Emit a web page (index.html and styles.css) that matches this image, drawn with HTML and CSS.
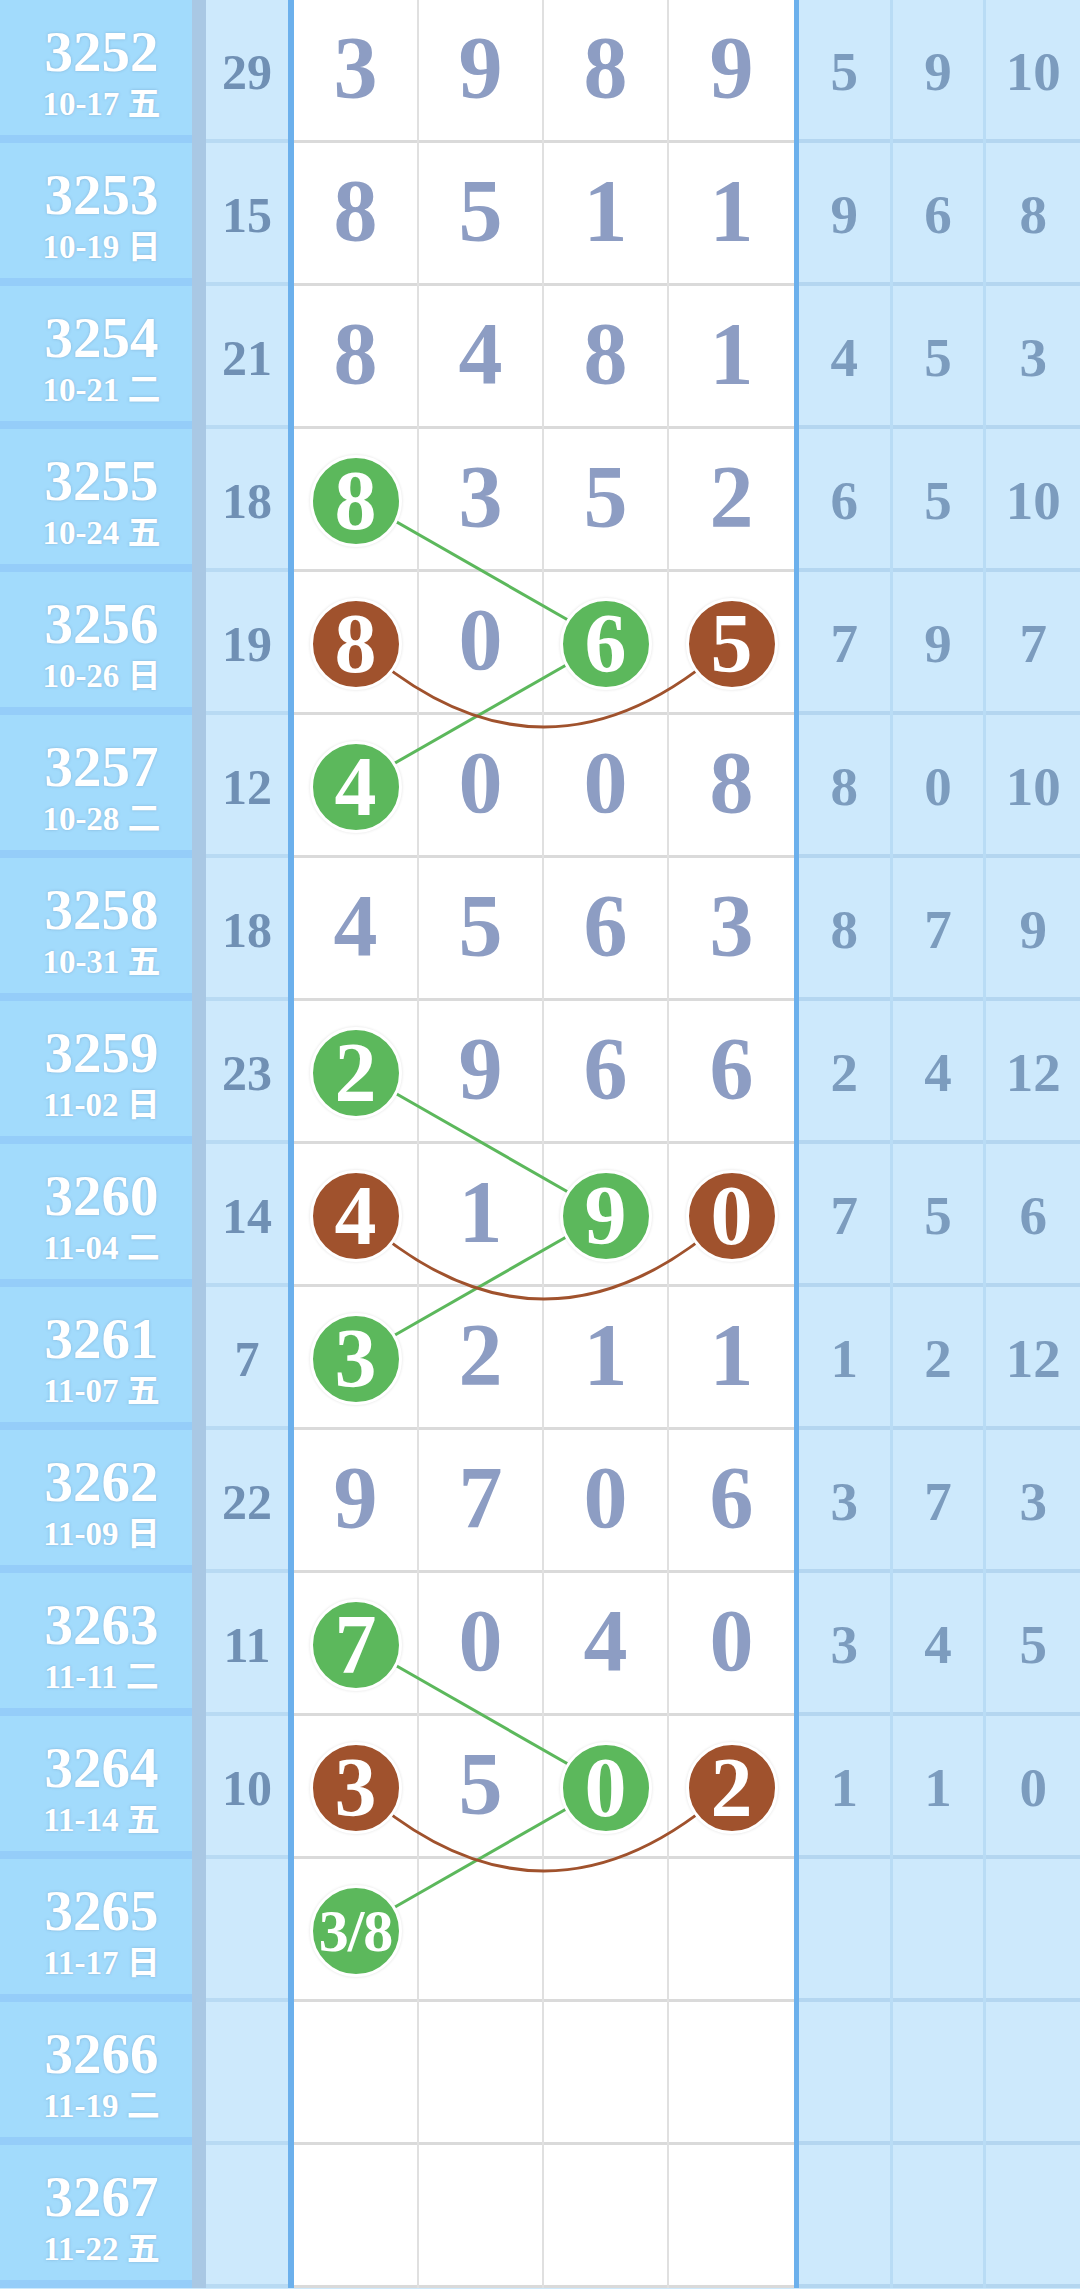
FILE: index.html
```html
<!DOCTYPE html>
<html lang="zh">
<head>
    <meta charset="UTF-8" />
    <meta name="viewport" content="width=device-width, initial-scale=1" />
    <title>走势图</title>
    <link rel="stylesheet" href="styles.css">
</head>
<body>

<div class="chart">

    <div class="row">
        <div class="issue"><b>3252</b><span class="date">10-17 五</span></div>
        <div class="sum">29</div>
        <div class="main"><div class="cell"><span class="n">3</span></div><div class="cell"><span class="n">9</span></div><div class="cell"><span class="n">8</span></div><div class="cell"><span class="n">9</span></div></div>
        <div class="side"><div class="cell">5</div><div class="cell">9</div><div class="cell">10</div></div>
    </div>

    <div class="row">
        <div class="issue"><b>3253</b><span class="date">10-19 日</span></div>
        <div class="sum">15</div>
        <div class="main"><div class="cell"><span class="n">8</span></div><div class="cell"><span class="n">5</span></div><div class="cell"><span class="n">1</span></div><div class="cell"><span class="n">1</span></div></div>
        <div class="side"><div class="cell">9</div><div class="cell">6</div><div class="cell">8</div></div>
    </div>

    <div class="row">
        <div class="issue"><b>3254</b><span class="date">10-21 二</span></div>
        <div class="sum">21</div>
        <div class="main"><div class="cell"><span class="n">8</span></div><div class="cell"><span class="n">4</span></div><div class="cell"><span class="n">8</span></div><div class="cell"><span class="n">1</span></div></div>
        <div class="side"><div class="cell">4</div><div class="cell">5</div><div class="cell">3</div></div>
    </div>

    <div class="row">
        <div class="issue"><b>3255</b><span class="date">10-24 五</span></div>
        <div class="sum">18</div>
        <div class="main"><div class="cell"><span class="ball green">8</span></div><div class="cell"><span class="n">3</span></div><div class="cell"><span class="n">5</span></div><div class="cell"><span class="n">2</span></div></div>
        <div class="side"><div class="cell">6</div><div class="cell">5</div><div class="cell">10</div></div>
    </div>

    <div class="row">
        <div class="issue"><b>3256</b><span class="date">10-26 日</span></div>
        <div class="sum">19</div>
        <div class="main"><div class="cell"><span class="ball brown">8</span></div><div class="cell"><span class="n">0</span></div><div class="cell"><span class="ball green">6</span></div><div class="cell"><span class="ball brown">5</span></div></div>
        <div class="side"><div class="cell">7</div><div class="cell">9</div><div class="cell">7</div></div>
    </div>

    <div class="row">
        <div class="issue"><b>3257</b><span class="date">10-28 二</span></div>
        <div class="sum">12</div>
        <div class="main"><div class="cell"><span class="ball green">4</span></div><div class="cell"><span class="n">0</span></div><div class="cell"><span class="n">0</span></div><div class="cell"><span class="n">8</span></div></div>
        <div class="side"><div class="cell">8</div><div class="cell">0</div><div class="cell">10</div></div>
    </div>

    <div class="row">
        <div class="issue"><b>3258</b><span class="date">10-31 五</span></div>
        <div class="sum">18</div>
        <div class="main"><div class="cell"><span class="n">4</span></div><div class="cell"><span class="n">5</span></div><div class="cell"><span class="n">6</span></div><div class="cell"><span class="n">3</span></div></div>
        <div class="side"><div class="cell">8</div><div class="cell">7</div><div class="cell">9</div></div>
    </div>

    <div class="row">
        <div class="issue"><b>3259</b><span class="date">11-02 日</span></div>
        <div class="sum">23</div>
        <div class="main"><div class="cell"><span class="ball green">2</span></div><div class="cell"><span class="n">9</span></div><div class="cell"><span class="n">6</span></div><div class="cell"><span class="n">6</span></div></div>
        <div class="side"><div class="cell">2</div><div class="cell">4</div><div class="cell">12</div></div>
    </div>

    <div class="row">
        <div class="issue"><b>3260</b><span class="date">11-04 二</span></div>
        <div class="sum">14</div>
        <div class="main"><div class="cell"><span class="ball brown">4</span></div><div class="cell"><span class="n">1</span></div><div class="cell"><span class="ball green">9</span></div><div class="cell"><span class="ball brown">0</span></div></div>
        <div class="side"><div class="cell">7</div><div class="cell">5</div><div class="cell">6</div></div>
    </div>

    <div class="row">
        <div class="issue"><b>3261</b><span class="date">11-07 五</span></div>
        <div class="sum">7</div>
        <div class="main"><div class="cell"><span class="ball green">3</span></div><div class="cell"><span class="n">2</span></div><div class="cell"><span class="n">1</span></div><div class="cell"><span class="n">1</span></div></div>
        <div class="side"><div class="cell">1</div><div class="cell">2</div><div class="cell">12</div></div>
    </div>

    <div class="row">
        <div class="issue"><b>3262</b><span class="date">11-09 日</span></div>
        <div class="sum">22</div>
        <div class="main"><div class="cell"><span class="n">9</span></div><div class="cell"><span class="n">7</span></div><div class="cell"><span class="n">0</span></div><div class="cell"><span class="n">6</span></div></div>
        <div class="side"><div class="cell">3</div><div class="cell">7</div><div class="cell">3</div></div>
    </div>

    <div class="row">
        <div class="issue"><b>3263</b><span class="date">11-11 二</span></div>
        <div class="sum">11</div>
        <div class="main"><div class="cell"><span class="ball green">7</span></div><div class="cell"><span class="n">0</span></div><div class="cell"><span class="n">4</span></div><div class="cell"><span class="n">0</span></div></div>
        <div class="side"><div class="cell">3</div><div class="cell">4</div><div class="cell">5</div></div>
    </div>

    <div class="row">
        <div class="issue"><b>3264</b><span class="date">11-14 五</span></div>
        <div class="sum">10</div>
        <div class="main"><div class="cell"><span class="ball brown">3</span></div><div class="cell"><span class="n">5</span></div><div class="cell"><span class="ball green">0</span></div><div class="cell"><span class="ball brown">2</span></div></div>
        <div class="side"><div class="cell">1</div><div class="cell">1</div><div class="cell">0</div></div>
    </div>

    <div class="row">
        <div class="issue"><b>3265</b><span class="date">11-17 日</span></div>
        <div class="sum"></div>
        <div class="main"><div class="cell"><span class="ball green small">3/8</span></div><div class="cell"></div><div class="cell"></div><div class="cell"></div></div>
        <div class="side"><div class="cell"></div><div class="cell"></div><div class="cell"></div></div>
    </div>

    <div class="row">
        <div class="issue"><b>3266</b><span class="date">11-19 二</span></div>
        <div class="sum"></div>
        <div class="main"><div class="cell"></div><div class="cell"></div><div class="cell"></div><div class="cell"></div></div>
        <div class="side"><div class="cell"></div><div class="cell"></div><div class="cell"></div></div>
    </div>

    <div class="row">
        <div class="issue"><b>3267</b><span class="date">11-22 五</span></div>
        <div class="sum"></div>
        <div class="main"><div class="cell"></div><div class="cell"></div><div class="cell"></div><div class="cell"></div></div>
        <div class="side"><div class="cell"></div><div class="cell"></div><div class="cell"></div></div>
    </div>

    <!-- connecting lines, drawn under the balls -->
    <svg class="links" width="1080" height="2288" viewBox="0 0 1080 2288">
        <g class="green-line">
            <line x1="356.5" y1="499" x2="606.5" y2="642" />
            <line x1="606.5" y1="642" x2="356.5" y2="785" />
            <line x1="356.5" y1="1071" x2="606.5" y2="1214" />
            <line x1="606.5" y1="1214" x2="356.5" y2="1357" />
            <line x1="356.5" y1="1643" x2="606.5" y2="1786" />
            <line x1="606.5" y1="1786" x2="356.5" y2="1929" />
        </g>
        <g class="brown-line">
            <path d="M356.5 642 Q544 812 731.5 642" />
            <path d="M356.5 1214 Q544 1384 731.5 1214" />
            <path d="M356.5 1786 Q544 1956 731.5 1786" />
        </g>
    </svg>

</div>

</body>
</html>
```

FILE: styles.css
```css
html {
    background: #cde9fc;
}
body {
    margin: 0;
    padding: 0;
    font-family: "Liberation Serif", "Noto Sans CJK SC", serif;
    font-weight: bold;
}
.chart {
    position: relative;
    width: 1080px;
}
.row {
    display: grid;
    grid-template-columns: 206px 88px 500px 286px;
    height: 143px;
}

/* issue column */
.issue {
    background: #a2dbfc;
    border-right: 14px solid #a9c8e4;
    box-shadow: inset 0 -8px #95cdf9;
    color: #fff;
    display: flex;
    flex-direction: column;
    align-items: center;
    justify-content: center;
    padding-left: 11px;
    text-shadow: 0 0 3px rgba(90, 130, 170, 0.45);
}
.issue b {
    font-size: 57px;
    line-height: 60px;
}
.issue .date {
    font-size: 33px;
    line-height: 36px;
    margin-top: 4px;
}

/* sum column */
.sum {
    background: #cde9fc;
    border-right: 6px solid #6cb0ec;
    box-shadow: inset 0 -4px #b8daf3;
    color: #7090b4;
    font-size: 50px;
    display: flex;
    align-items: center;
    justify-content: center;
}

/* main digits */
.main {
    display: grid;
    grid-template-columns: repeat(4, 1fr);
    background: #fff;
}
.main .cell {
    display: flex;
    align-items: center;
    justify-content: center;
    border-right: 2px solid #e0e0e0;
    box-shadow: inset 0 -3px #dadada;
}
.main .cell:last-child {
    border-right: none;
}
.n {
    color: #8d9dc3;
    font-size: 88px;
    line-height: 1;
    margin-bottom: 8px;
}
.ball {
    position: relative;
    z-index: 2;
    width: 86px;
    height: 86px;
    border-radius: 50%;
    border: 3px solid #fff;
    box-shadow: 0 0 3px rgba(0, 0, 0, 0.12);
    color: #fff;
    font-size: 84px;
    line-height: 1;
    display: flex;
    align-items: center;
    justify-content: center;
}
.ball.green {
    background: #5cb85c;
}
.ball.brown {
    background: #a0522d;
}
.ball.small {
    font-size: 60px;
    letter-spacing: -1px;
}

/* right columns */
.side {
    display: grid;
    grid-template-columns: repeat(3, 1fr);
    border-left: 5px solid #6cb0ec;
    background: #cde9fc;
}
.side .cell {
    display: flex;
    align-items: center;
    justify-content: center;
    border-right: 3px solid #b9dcf5;
    box-shadow: inset 0 -4px #b4d6f0;
    color: #7c9cbe;
    font-size: 55px;
}
.side .cell:last-child {
    border-right: none;
}

/* lines between balls */
.links {
    position: absolute;
    top: 0;
    left: 0;
    z-index: 1;
    pointer-events: none;
}
.green-line line {
    stroke: #5cb85c;
    stroke-width: 3;
}
.brown-line path {
    stroke: #a0522d;
    stroke-width: 3;
    fill: none;
}
```
